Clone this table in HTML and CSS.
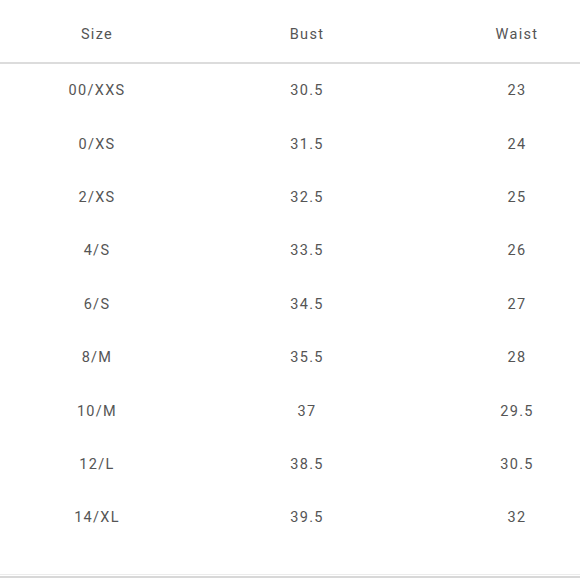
FILE: index.html
```html
<!DOCTYPE html>
<html>
<head>
<meta charset="utf-8">
<link rel="stylesheet" href="styles.css">
</head>
<body>
<div class="page">
  <div class="table">
    <div class="row head"><div>Size</div><div>Bust</div><div>Waist</div></div>
    <div class="row"><div>00/XXS</div><div>30.5</div><div>23</div></div>
    <div class="row"><div>0/XS</div><div>31.5</div><div>24</div></div>
    <div class="row"><div>2/XS</div><div>32.5</div><div>25</div></div>
    <div class="row"><div>4/S</div><div>33.5</div><div>26</div></div>
    <div class="row"><div>6/S</div><div>34.5</div><div>27</div></div>
    <div class="row"><div>8/M</div><div>35.5</div><div>28</div></div>
    <div class="row"><div>10/M</div><div>37</div><div>29.5</div></div>
    <div class="row"><div>12/L</div><div>38.5</div><div>30.5</div></div>
    <div class="row"><div>14/XL</div><div>39.5</div><div>32</div></div>
  </div>
  <div class="bottom"></div>
</div>
</body>
</html>
```
FILE: styles.css
```css
html, body {
  margin: 0;
  padding: 0;
  background: #fff;
  overflow: hidden;
}
.page {
  width: 580px;
  height: 580px;
  overflow: hidden;
  font-family: Roboto, "Liberation Sans", sans-serif;
  font-size: 14.5px;
  font-weight: 400;
  letter-spacing: 1.3px;
  color: #555555;
}
.table {
  margin-left: -8px;
  width: 630px;
}
.row {
  display: grid;
  grid-template-columns: 210px 210px 210px;
  height: 53.4px;
  align-items: center;
  text-align: center;
}
.row.head {
  height: 64px;
  padding-top: 7px;
  box-sizing: border-box;
  border-bottom: 2px solid #dcdcdc;
}
.bottom {
  margin-top: 29px;
  border-top: 1px solid #ececec;
  border-bottom: 2px solid #d8d8d8;
  height: 1px;
}
```
